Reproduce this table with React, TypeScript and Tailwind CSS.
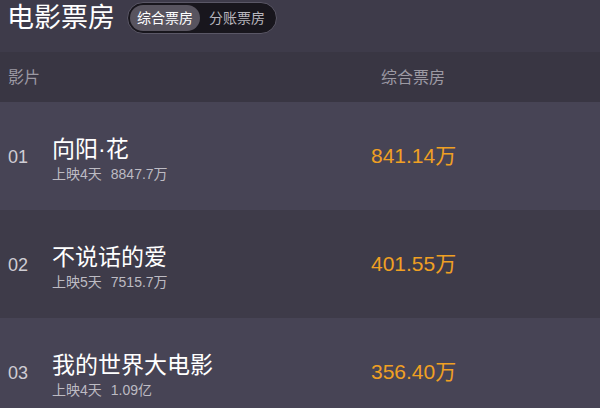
import React from "react"

const films = [
  { rank: "01", name: "向阳·花", days: "上映4天", total: "8847.7万", box: "841.14万" },
  { rank: "02", name: "不说话的爱", days: "上映5天", total: "7515.7万", box: "401.55万" },
  { rank: "03", name: "我的世界大电影", days: "上映4天", total: "1.09亿", box: "356.40万" },
]

function App() {
  return (
    <div
      className="h-[408px] w-[600px] overflow-hidden bg-[#3e3b4a]"
      style={{ fontFamily: '"Liberation Sans", "Noto Sans CJK SC", sans-serif' }}
    >
      <div className="flex h-[52px] items-start gap-[12px] pl-[7px] pt-[1px]">
        <h1 className="text-[27px] leading-[34px] text-white">电影票房</h1>
        <div className="mt-[1px] flex h-[32px] items-center rounded-full border border-[#5a5766] bg-[#18161d] px-[2px]">
          <button className="h-[26px] rounded-full bg-[#58545f] px-[7px] text-[14px] text-white">
            综合票房
          </button>
          <button className="h-[26px] px-[9px] text-[14px] text-[#b8b6bd]">分账票房</button>
        </div>
      </div>

      <div className="flex h-[50px] items-center bg-[#393643] pt-[2px] text-[16px] text-[#9c99a3]">
        <div className="w-[381px] pl-[8px]">影片</div>
        <div>综合票房</div>
      </div>

      {films.map((f, i) => (
        <div
          key={f.rank}
          className={`flex h-[108px] items-center ${i % 2 === 0 ? "bg-[#474455]" : "bg-[#3e3b49]"}`}
        >
          <div className="w-[52px] pl-[8px] pt-[2px] text-[18px] text-[#cfcdd4]">{f.rank}</div>
          <div className="w-[319px] pt-[4px]">
            <div className="text-[23px] leading-[30px] text-white">{f.name}</div>
            <div className="mt-[1px] flex gap-[9px] text-[14px] leading-[18px] text-[#bdbbc3]">
              <span>{f.days}</span>
              <span>{f.total}</span>
            </div>
          </div>
          <div className="text-[21px] text-[#f0a023]">{f.box}</div>
        </div>
      ))}
    </div>
  )
}

export default App
